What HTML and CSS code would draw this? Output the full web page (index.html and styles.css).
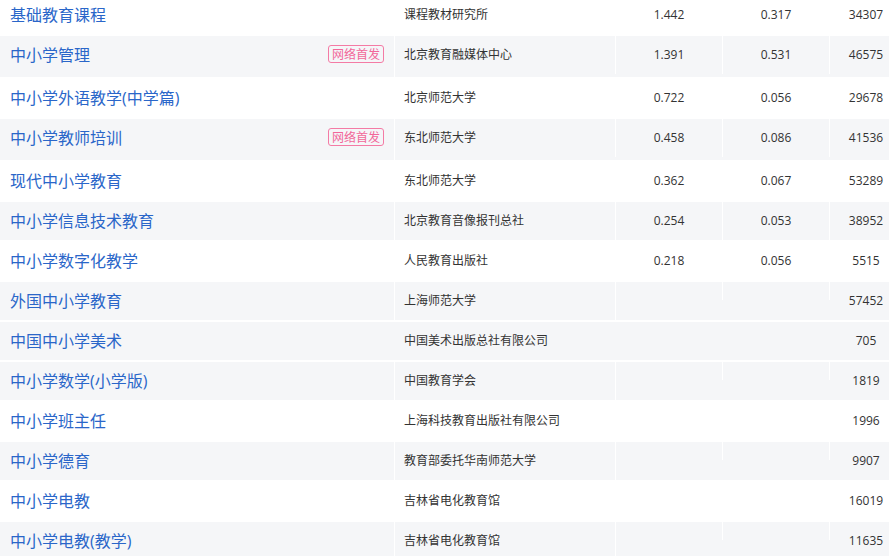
FILE: index.html
```html
<!DOCTYPE html>
<html lang="zh-CN">
<head>
<meta charset="utf-8">
<title>期刊列表</title>
<link rel="stylesheet" href="styles.css">
</head>
<body>
<div class="table">
  <div class="row">
    <div class="c name"><div class="inner"><a class="title">基础教育课程</a></div></div>
    <div class="c org">课程教材研究所</div>
    <div class="c num">1.442</div>
    <div class="c num">0.317</div>
    <div class="c last">34307</div>
  </div>
  <div class="row odd tall">
    <div class="c name"><div class="inner"><a class="title">中小学管理</a><span class="badge">网络首发</span></div></div>
    <div class="c org">北京教育融媒体中心</div>
    <div class="c num">1.391</div>
    <div class="c num">0.531</div>
    <div class="c last">46575</div>
  </div>
  <div class="row">
    <div class="c name"><div class="inner"><a class="title">中小学外语教学(中学篇)</a></div></div>
    <div class="c org">北京师范大学</div>
    <div class="c num">0.722</div>
    <div class="c num">0.056</div>
    <div class="c last">29678</div>
  </div>
  <div class="row odd tall">
    <div class="c name"><div class="inner"><a class="title">中小学教师培训</a><span class="badge">网络首发</span></div></div>
    <div class="c org">东北师范大学</div>
    <div class="c num">0.458</div>
    <div class="c num">0.086</div>
    <div class="c last">41536</div>
  </div>
  <div class="row">
    <div class="c name"><div class="inner"><a class="title">现代中小学教育</a></div></div>
    <div class="c org">东北师范大学</div>
    <div class="c num">0.362</div>
    <div class="c num">0.067</div>
    <div class="c last">53289</div>
  </div>
  <div class="row odd">
    <div class="c name"><div class="inner"><a class="title">中小学信息技术教育</a></div></div>
    <div class="c org">北京教育音像报刊总社</div>
    <div class="c num">0.254</div>
    <div class="c num">0.053</div>
    <div class="c last">38952</div>
  </div>
  <div class="row">
    <div class="c name"><div class="inner"><a class="title">中小学数字化教学</a></div></div>
    <div class="c org">人民教育出版社</div>
    <div class="c num">0.218</div>
    <div class="c num">0.056</div>
    <div class="c last">5515</div>
  </div>
  <div class="row odd">
    <div class="c name"><div class="inner"><a class="title">外国中小学教育</a></div></div>
    <div class="c org">上海师范大学</div>
    <div class="c num empty"></div>
    <div class="c num empty"></div>
    <div class="c last">57452</div>
  </div>
  <div class="row odd hover">
    <div class="c name"><div class="inner"><a class="title">中国中小学美术</a></div></div>
    <div class="c org">中国美术出版总社有限公司</div>
    <div class="c num empty"></div>
    <div class="c num empty"></div>
    <div class="c last">705</div>
  </div>
  <div class="row odd">
    <div class="c name"><div class="inner"><a class="title">中小学数学(小学版)</a></div></div>
    <div class="c org">中国教育学会</div>
    <div class="c num empty"></div>
    <div class="c num empty"></div>
    <div class="c last">1819</div>
  </div>
  <div class="row">
    <div class="c name"><div class="inner"><a class="title">中小学班主任</a></div></div>
    <div class="c org">上海科技教育出版社有限公司</div>
    <div class="c num empty"></div>
    <div class="c num empty"></div>
    <div class="c last">1996</div>
  </div>
  <div class="row odd">
    <div class="c name"><div class="inner"><a class="title">中小学德育</a></div></div>
    <div class="c org">教育部委托华南师范大学</div>
    <div class="c num empty"></div>
    <div class="c num empty"></div>
    <div class="c last">9907</div>
  </div>
  <div class="row">
    <div class="c name"><div class="inner"><a class="title">中小学电教</a></div></div>
    <div class="c org">吉林省电化教育馆</div>
    <div class="c num empty"></div>
    <div class="c num empty"></div>
    <div class="c last">16019</div>
  </div>
  <div class="row odd">
    <div class="c name"><div class="inner"><a class="title">中小学电教(教学)</a></div></div>
    <div class="c org">吉林省电化教育馆</div>
    <div class="c num empty"></div>
    <div class="c num empty"></div>
    <div class="c last">11635</div>
  </div>
</div>
</body>
</html>
```

FILE: styles.css
```css
html, body {
  margin: 0;
  padding: 0;
  background: #ffffff;
  overflow: hidden;
}
body {
  font-family: "Open Sans", "Noto Sans CJK SC", sans-serif;
  color: #333333;
  width: 889px;
  height: 556px;
}
.table {
  width: 902px;
  margin-top: -4px;
  display: flex;
  flex-direction: column;
}
.row {
  display: flex;
  align-items: flex-start;
  height: 38px;
  border-bottom: 2px solid #ffffff;
  background: #ffffff;
}
.row.tall {
  height: 41px;
}
.row.odd {
  background: #f5f6f8;
}
.c {
  box-sizing: border-box;
  height: 38px;
  display: flex;
  align-items: center;
  border-right: 1px solid #ffffff;
  font-size: 12px;
  line-height: 18px;
}
.name {
  width: 395px;
  height: 100%;
  align-items: flex-start;
  padding: 0 10px;
}
.name .inner {
  height: 38px;
  width: 100%;
  display: flex;
  align-items: center;
  justify-content: space-between;
}
.title {
  color: #2a66c9;
  font-size: 16px;
  line-height: 18px;
  text-decoration: none;
  cursor: pointer;
}
.badge {
  font-size: 12px;
  line-height: 16px;
  color: #f2679a;
  border: 1px solid #f47ba5;
  border-radius: 3px;
  padding: 0 3px;
  margin-top: -2px;
  font-family: "Noto Sans CJK SC", sans-serif;
}
.org {
  width: 221px;
  padding-left: 9px;
}
.num {
  width: 107px;
  justify-content: center;
}
.num.empty {
  height: 18px;
}
.last {
  width: 72px;
  border-right: none;
  justify-content: center;
}
.row.hover .c {
  border-right-color: transparent;
}
```
